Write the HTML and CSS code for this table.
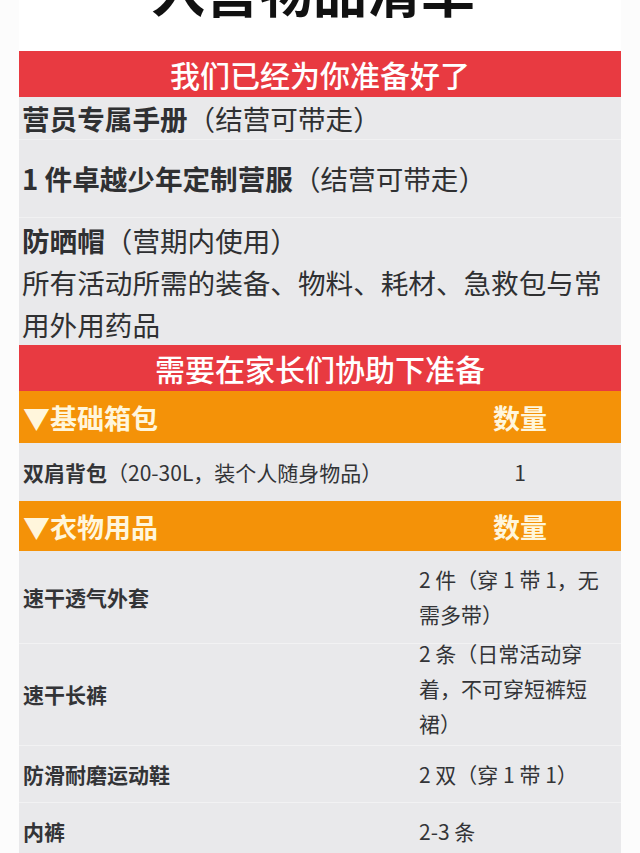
FILE: index.html
```html
<!DOCTYPE html>
<html lang="zh-CN">
<head>
<meta charset="utf-8">
<title>入营物品清单</title>
<link rel="stylesheet" href="styles.css">
</head>
<body>
<div class="page">
  <h1 class="title">入营物品清单</h1>

  <div class="bar">我们已经为你准备好了</div>
  <div class="ready">
    <p class="ready-row row-a"><b>营员专属手册</b>（结营可带走）</p>
    <p class="ready-row row-b"><b>1 件卓越少年定制营服</b>（结营可带走）</p>
    <div class="ready-row row-c">
      <p><b>防晒帽</b>（营期内使用）</p>
      <p>所有活动所需的装备、物料、耗材、急救包与常用外用药品</p>
    </div>
  </div>

  <div class="bar">需要在家长们协助下准备</div>

  <div class="table">
    <div class="thead"><span class="th-name">▼基础箱包</span><span class="th-qty">数量</span></div>
    <div class="tr single"><span class="td-name"><b>双肩背包</b>（20-30L，装个人随身物品）</span><span class="td-qty center">1</span></div>
  </div>

  <div class="table">
    <div class="thead thead2"><span class="th-name">▼衣物用品</span><span class="th-qty">数量</span></div>
    <div class="tr r1"><span class="td-name"><b>速干透气外套</b></span><span class="td-qty">2 件（穿 1 带 1，无需多带）</span></div>
    <div class="tr r2"><span class="td-name"><b>速干长裤</b></span><span class="td-qty">2 条（日常活动穿着，不可穿短裤短裙）</span></div>
    <div class="tr r3"><span class="td-name"><b>防滑耐磨运动鞋</b></span><span class="td-qty">2 双（穿 1 带 1）</span></div>
    <div class="tr r4"><span class="td-name"><b>内裤</b></span><span class="td-qty">2-3 条</span></div>
  </div>
</div>
</body>
</html>
```

FILE: styles.css
```css
html, body {
  margin: 0;
  padding: 0;
  background: #fcfcfc;
}
body {
  font-family: "Noto Sans CJK SC", "Noto Sans", sans-serif;
  color: #303133;
  overflow: hidden;
}
.page {
  width: 602px;
  margin-left: 19px;
  background: #ffffff;
}
p { margin: 0; }
b { font-weight: 700; }

.title {
  margin: -37px 0 0 0;
  height: 88px;
  font-size: 54px;
  line-height: 54px;
  font-weight: 700;
  color: #111;
  text-align: center;
  padding-right: 14px;
  box-sizing: border-box;
}

.bar {
  height: 46px;
  line-height: 46px;
  background: #e83a41;
  color: #ffffff;
  font-size: 30px;
  font-weight: 500;
  text-align: center;
}

.ready {
  background: #e9e9eb;
  font-size: 27.6px;
  color: #2f3032;
}
.ready-row {
  padding-left: 3px;
  line-height: 42px;
}
.row-a {
  padding-top: 0;
  border-bottom: 1px solid #f1f1f2;
}
.row-b {
  padding-top: 17px;
  padding-bottom: 18px;
  border-bottom: 1px solid #f1f1f2;
}
.row-c {
  padding-top: 1px;
  padding-bottom: 0;
}

.table {
  background: #e9e9eb;
}
.thead {
  display: grid;
  grid-template-columns: 1fr 202px;
  align-items: center;
  height: 52px;
  background: #f49208;
  color: #fff6dc;
  font-size: 27px;
  font-weight: 700;
}
.thead2 { height: 50px; }
.th-name { padding-left: 4px; }
.th-qty { text-align: center; }

.tr {
  display: grid;
  grid-template-columns: 1fr 202px;
  align-items: center;
  font-size: 21px;
  line-height: 35px;
  color: #333437;
  border-bottom: 1px solid #f2f2f3;
}
.tr:last-child { border-bottom: none; }
.td-name { padding-left: 4px; }
.td-qty { padding-right: 8px; }
.td-qty.center { text-align: center; padding-right: 0; }
.single { height: 58px; }
.r1 { height: 92px; }
.r2 { height: 101px; }
.r2 .td-qty { margin-top: -12px; }
.r3 { height: 56px; }
.r4 { height: 56px; }
```
